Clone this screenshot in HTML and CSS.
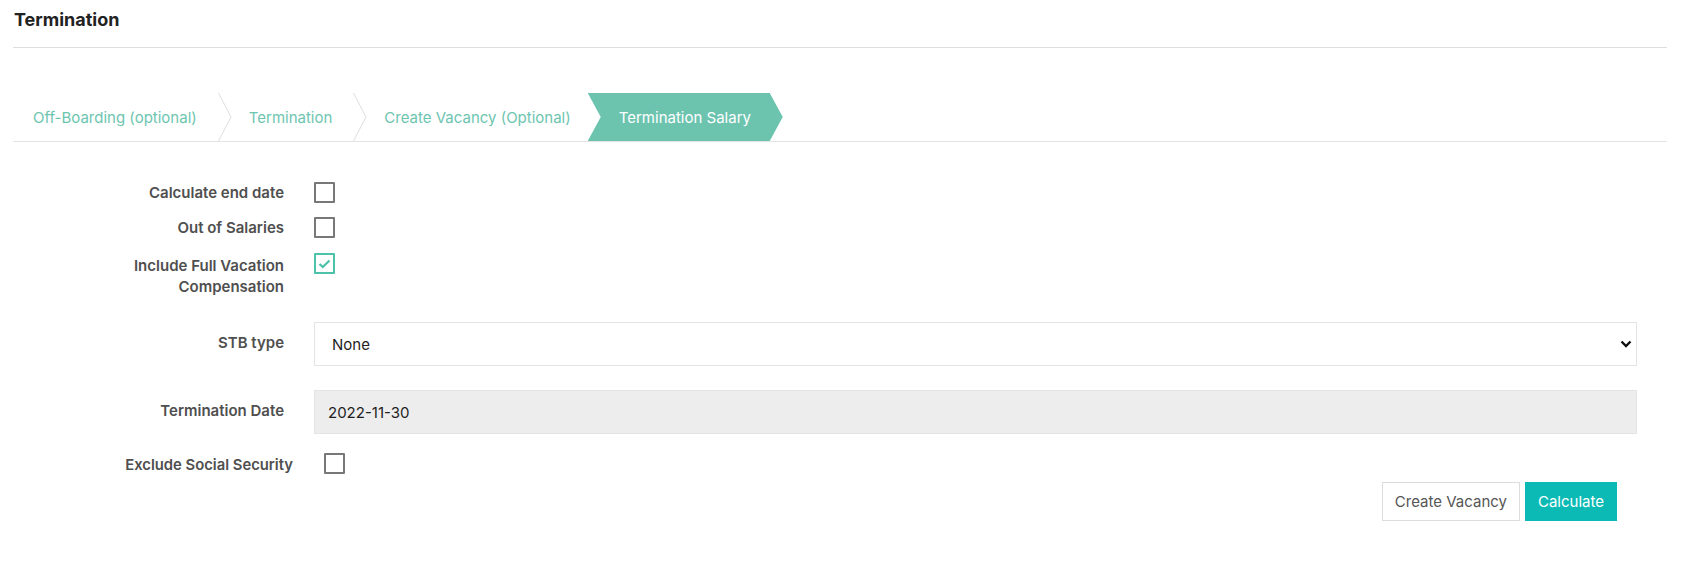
FILE: index.html
```html
<!DOCTYPE html>
<html lang="en">
<head>
<meta charset="utf-8">
<title>Termination</title>
<link rel="stylesheet" href="styles.css">
</head>
<body>
<div class="page">
  <div class="header">
    <h1 class="title">Termination</h1>
  </div>

  <div class="steps">
    <div class="step step-first">Off-Boarding (optional)</div>
    <svg class="sep" width="14" height="48" viewBox="0 0 14 48"><polyline points="0.5,0 13,24 0.5,48" fill="none" stroke="#dedede" stroke-width="1"/></svg>
    <div class="step">Termination</div>
    <svg class="sep" width="14" height="48" viewBox="0 0 14 48"><polyline points="0.5,0 13,24 0.5,48" fill="none" stroke="#dedede" stroke-width="1"/></svg>
    <div class="step step-last">Create Vacancy (Optional)</div>
    <div class="step-active">Termination Salary</div>
  </div>

  <form class="form">
    <div class="row row-check">
      <label class="label">Calculate end date</label>
      <span class="checkbox"></span>
    </div>
    <div class="row row-check row-2">
      <label class="label">Out of Salaries</label>
      <span class="checkbox"></span>
    </div>
    <div class="row row-check row-3">
      <label class="label label-wrap">Include Full Vacation Compensation</label>
      <span class="checkbox checked"><svg width="17" height="17" viewBox="0 0 17 17"><polyline points="3.5,9 6.8,12 13.5,5.5" fill="none" stroke="#4cc2aa" stroke-width="2.2"/></svg></span>
    </div>
    <div class="row row-field row-select">
      <label class="label label-field">STB type</label>
      <div class="select">
        <span>None</span>
        <svg width="12" height="8" viewBox="0 0 12 8"><polyline points="1.5,1.5 6,6 10.5,1.5" fill="none" stroke="#111" stroke-width="2.4"/></svg>
      </div>
    </div>
    <div class="row row-field row-date">
      <label class="label label-field">Termination Date</label>
      <div class="input input-disabled">2022-11-30</div>
    </div>
    <div class="row row-check row-exclude">
      <label class="label label-exclude">Exclude Social Security</label>
      <span class="checkbox"></span>
    </div>
    <div class="actions">
      <button type="button" class="btn btn-default">Create Vacancy</button>
      <button type="button" class="btn btn-primary">Calculate</button>
    </div>
  </form>
</div>
</body>
</html>
```

FILE: styles.css
```css
* { box-sizing: border-box; }

html, body {
  margin: 0;
  padding: 0;
  background: #ffffff;
  font-family: "Inter", "Roboto", "Liberation Sans", sans-serif;
}

.page {
  padding: 0 21px 0 13px;
}

.header {
  padding: 10px 0 17px 1px;
  border-bottom: 1px solid #dedede;
}

.title {
  margin: 0;
  font-family: "Inter", "Liberation Sans", sans-serif;
  font-size: 18px;
  font-weight: 700;
  line-height: 20px;
  color: #222222;
}

.steps {
  margin-top: 45px;
  height: 49px;
  border-bottom: 1px solid #e3e3e3;
  display: flex;
  align-items: stretch;
  font-family: "Inter", "Liberation Sans", sans-serif;
  font-size: 15px;
}

.step {
  display: flex;
  align-items: center;
  padding: 0 21px 0 17px;
  color: #6dc5b0;
  white-space: nowrap;
}

.step-first {
  padding-left: 20px;
}

.step-last {
  padding-right: 18px;
}

.sep {
  display: block;
  flex: none;
}

.step-active {
  display: flex;
  align-items: center;
  height: 48px;
  margin-left: -1px;
  padding: 0 20px 0 31px;
  width: 195px;
  background: #6cc4af;
  color: #ffffff;
  white-space: nowrap;
  clip-path: polygon(0 0, 182px 0, 195px 24px, 182px 48px, 0 48px, 13px 24px);
}

.form {
  padding-top: 40px;
}

.row {
  display: flex;
  align-items: flex-start;
}

.label {
  width: 271px;
  flex: none;
  margin-right: 30px;
  text-align: right;
  font-size: 15px;
  font-weight: 600;
  line-height: 21px;
  color: #4f4f4f;
}

.label-wrap {
  padding-top: 2px;
  padding-left: 100px;
}

.label-field {
  padding-top: 10px;
}

.label-exclude {
  width: 280px;
  margin-right: 31px;
  padding-top: 2px;
  height: 21px;
  font-size: 14.8px;
}

.row-check {
  min-height: 21px;
}

.row-2 { margin-top: 14px; }
.row-3 { margin-top: 15px; }
.row-select { margin-top: 25px; }
.row-date { margin-top: 24px; }
.row-exclude { margin-top: 19px; }

.checkbox {
  display: block;
  flex: none;
  width: 21px;
  height: 21px;
  border: 2px solid #787878;
  border-radius: 1px;
  background: #ffffff;
}

.checkbox svg {
  display: block;
}

.checkbox.checked {
  border-color: #4cc2aa;
}

.select,
.input {
  flex: 1;
  height: 44px;
  margin-right: 30px;
  border: 1px solid #e4e4e4;
  display: flex;
  align-items: center;
  font-size: 15px;
  color: #1e1e1e;
}

.select {
  justify-content: space-between;
  padding: 0 4px 0 17px;
  background: #ffffff;
}

.select svg {
  display: block;
}

.input-disabled {
  background: #ededed;
  padding: 0 13px;
}

.actions {
  margin-top: 8px;
  display: flex;
  justify-content: flex-end;
  gap: 5px;
  padding-right: 50px;
}

.btn {
  font-family: "Inter", "Liberation Sans", sans-serif;
  font-size: 15px;
  line-height: 21px;
  padding: 8px 12px;
  border-radius: 0;
  cursor: pointer;
}

.btn-default {
  background: #ffffff;
  border: 1px solid #dcdcdc;
  color: #555555;
}

.btn-primary {
  background: #0bbab5;
  border: 1px solid #0bbab5;
  color: #ffffff;
}
```
